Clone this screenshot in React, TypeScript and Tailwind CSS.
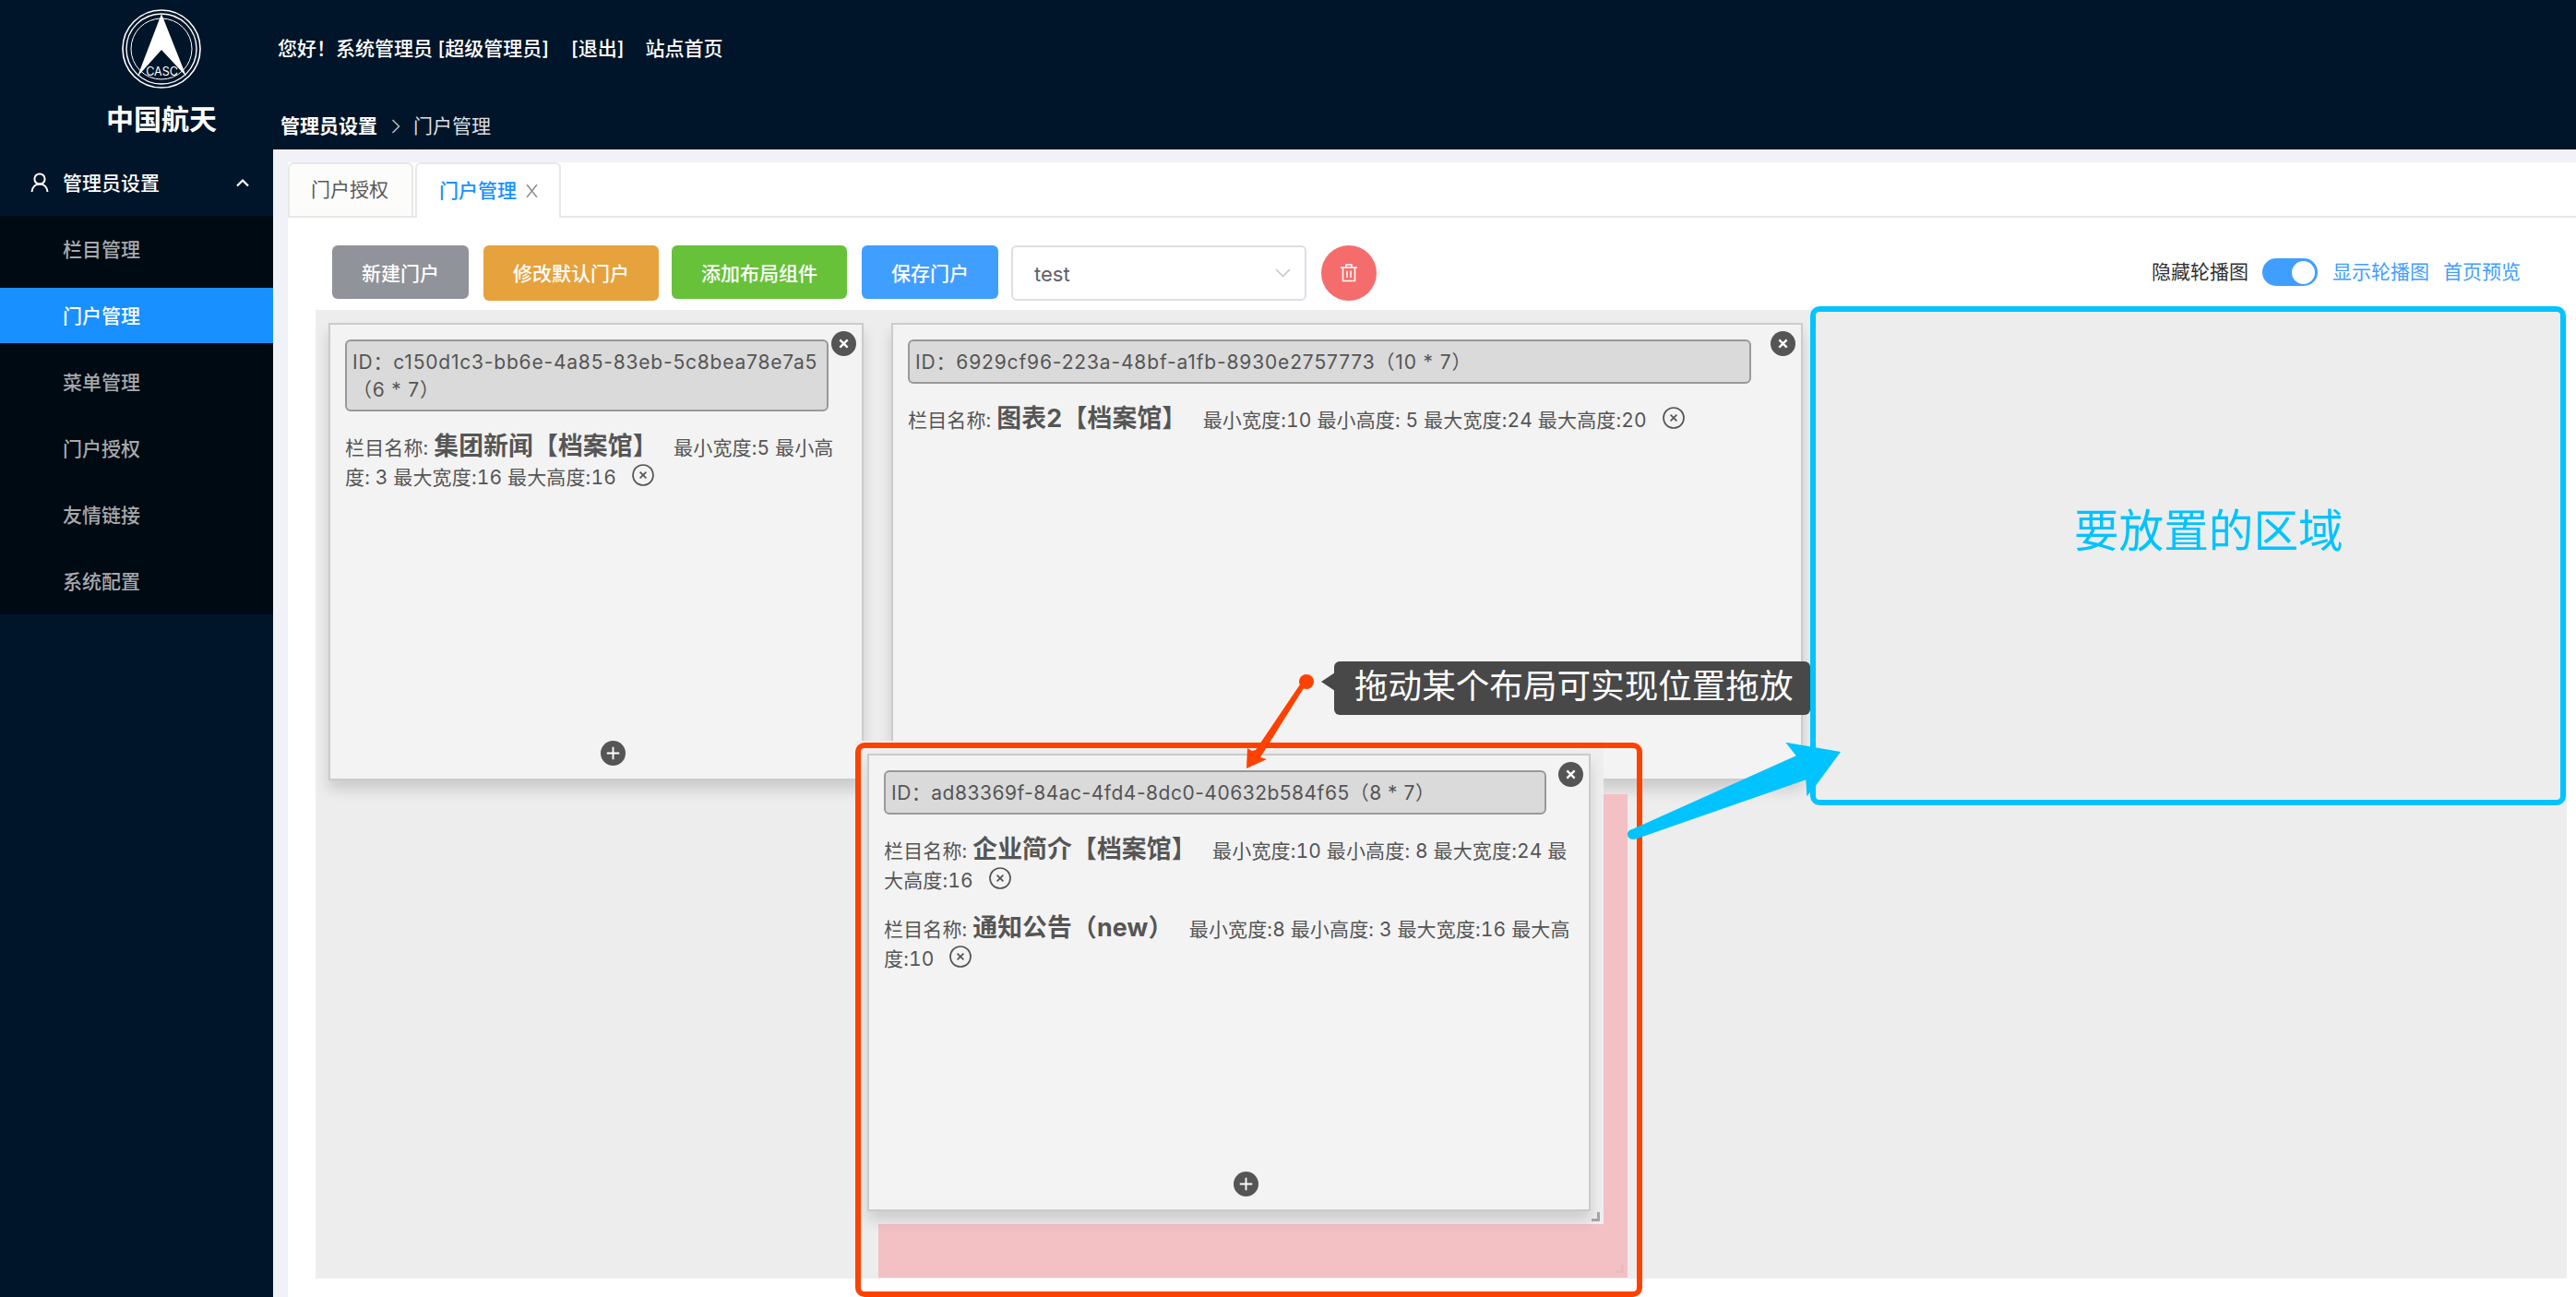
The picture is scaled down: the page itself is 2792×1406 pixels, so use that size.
import React from "react";

const MENU = ["栏目管理", "门户管理", "菜单管理", "门户授权", "友情链接", "系统配置"];

function RemoveIcon() {
  return (
    <svg className="ml-[17px] inline-block h-[24px] w-[24px] align-[-2px]" viewBox="0 0 24 24" fill="none" stroke="#555" strokeWidth="1.7">
      <circle cx="12" cy="12" r="11" />
      <path d="M8.600 8.600l6.800 6.800M15.400 8.600l-6.800 6.800" />
    </svg>
  );
}

function CloseDot() {
  return (
    <svg className="absolute top-[7px] right-[6px] h-[27px] w-[27px]" viewBox="0 0 26 26">
      <circle cx="13" cy="13" r="13" fill="#555" />
      <path d="M9 9l8 8M17 9l-8 8" stroke="#fff" strokeWidth="2.2" />
    </svg>
  );
}

function PlusDot() {
  return (
    <svg className="absolute bottom-[14px] left-1/2 ml-[5px] h-[27px] w-[27px]" viewBox="0 0 26 26">
      <circle cx="13" cy="13" r="13" fill="#555" />
      <path d="M13 6.5v13M6.5 13h13" stroke="#fff" strokeWidth="1.8" />
    </svg>
  );
}

type Item = { name: string; info: string };

function Card({ pos, inner, lines, items }: { pos: string; inner: string; lines: string[]; items: Item[] }) {
  return (
    <div className={"absolute border-2 border-[#cbcbcb] bg-[#f3f3f3] px-[16px] pt-[16px] shadow-[0_10px_14px_rgba(0,0,0,0.14)] " + pos}>
      <CloseDot />
      <div className={"rounded-[6px] border-2 border-[#999] bg-[#dadada] pt-[8px] pb-[6px] pl-[6px] text-[21px] leading-[30px] whitespace-nowrap text-[#555] " + inner}>
        {lines.map((l) => (
          <div key={l}>{l}</div>
        ))}
      </div>
      <div className="mt-[22px] flex flex-col gap-[19px]">
        {items.map((it) => (
          <div key={it.name} className="text-[21px] leading-[32px] tracking-[0.15px] whitespace-pre text-[#555] tabular-nums">
            栏目名称: <b className="text-[26.8px] leading-[30px] font-bold">{it.name}</b>
            {it.info}
            <RemoveIcon />
          </div>
        ))}
      </div>
      <PlusDot />
    </div>
  );
}

export default function App() {
  return (
    <div className="relative flex h-[1406px] w-[2792px] overflow-hidden bg-[#f0f2f7] font-['Inter','Noto_Sans_CJK_SC',sans-serif] text-[21px]">
      <aside className="flex w-[296px] shrink-0 flex-col bg-[#001529] text-white">
        <div className="flex h-[162px] flex-col items-center pl-[54px]">
          <svg className="mt-[10px] h-[86px] w-[86px]" viewBox="0 0 86 86" fill="none" stroke="#fff">
            <circle cx="43" cy="43" r="42" strokeWidth="1.6" />
            <circle cx="43" cy="43" r="38" strokeWidth="1.4" />
            <circle cx="43" cy="43" r="33" strokeWidth="1" />
            <path d="M43 5L70 73L43 44L17 73Z" fill="#fff" stroke="none" />
            <text x="43.500" y="72" fontSize="12.500" textAnchor="middle" fill="#fff" stroke="none">CASC</text>
          </svg>
          <div className="mt-[13px] text-[30px] leading-[40px] font-bold">中国航天</div>
        </div>
        <div className="flex h-[72px] items-center pr-[26px] pl-[33px] font-medium">
          <svg className="h-[22px] w-[20px]" viewBox="0 0 20 22" fill="none" stroke="#fff" strokeWidth="2">
            <circle cx="10" cy="7" r="5.6" />
            <path d="M1.5 21C2 15.500 5.500 12.500 10 12.500S18 15.500 18.500 21" />
          </svg>
          <span className="ml-[15px] flex-1 pt-[1px]">管理员设置</span>
          <svg className="h-[10px] w-[14px]" viewBox="0 0 14 10" fill="none" stroke="#fff" strokeWidth="2.2">
            <path d="M1 8.500L7 2.500L13 8.500" />
          </svg>
        </div>
        <nav className="flex h-[432px] flex-col gap-[12px] bg-[#000a13] py-[6px]">
          {MENU.map((m, i) => (
            <div
              key={m}
              className={
                i === 1
                  ? "flex h-[60px] items-center bg-[#1890ff] pt-[2px] pl-[68px] font-medium text-white"
                  : "flex h-[60px] items-center pt-[2px] pl-[68px] font-medium text-[#a6a9ac]"
              }
            >
              {m}
            </div>
          ))}
        </nav>
      </aside>

      <div className="flex flex-1 flex-col">
        <header className="flex h-[162px] flex-col bg-[#001529] text-white">
          <div className="mt-[37px] flex pl-[5px] leading-[32px] font-medium whitespace-pre">
            <span>您好！系统管理员 [超级管理员]</span>
            <span className="ml-[24px]">[退出]</span>
            <span className="ml-[23px]">站点首页</span>
          </div>
          <div className="mt-[52px] flex items-center pl-[8px] leading-[32px]">
            <span className="font-bold">管理员设置</span>
            <svg className="mr-[14px] ml-[15px] h-[16px] w-[10px]" viewBox="0 0 10 16" fill="none" stroke="#b0b8c0" strokeWidth="1.6">
              <path d="M1.500 1L8.500 8L1.500 15" />
            </svg>
            <span className="text-[#dcdfe3]">门户管理</span>
          </div>
        </header>

        <main className="mt-[14px] ml-[16px] flex flex-1 flex-col bg-white">
          <div className="flex h-[60px] border-b-2 border-[#e8e8e8]">
            <div className="flex h-[60px] w-[136px] items-center rounded-t-[6px] border-2 border-[#e8e8e8] bg-[#fcfcfa] pl-[23px] text-[#595959]">门户授权</div>
            <div className="ml-[2px] flex h-[60px] w-[158px] items-center rounded-t-[6px] border-2 border-b-0 border-[#e8e8e8] bg-white pl-[24px] font-medium text-[#1890ff]">
              门户管理
              <svg className="ml-[10px] h-[14px] w-[13px]" viewBox="0 0 13 14" fill="none" stroke="#8c8c8c" strokeWidth="1.5">
                <path d="M1 0L12 14M12 0L1 14" />
              </svg>
            </div>
          </div>

          <div className="flex h-[100px] items-start pt-[30px] pl-[48px] font-medium text-white">
            <div className="flex h-[58px] w-[148px] items-center justify-center rounded-[6px] bg-[#909399] pt-[3px]">新建门户</div>
            <div className="ml-[16px] flex h-[60px] w-[190px] items-center justify-center rounded-[6px] bg-[#e6a23c] pt-[1px]">修改默认门户</div>
            <div className="ml-[14px] flex h-[58px] w-[190px] items-center justify-center rounded-[6px] bg-[#67c23a] pt-[3px]">添加布局组件</div>
            <div className="ml-[16px] flex h-[58px] w-[148px] items-center justify-center rounded-[6px] bg-[#409eff] pt-[3px]">保存门户</div>
            <div className="ml-[14px] flex h-[60px] w-[320px] items-center justify-between rounded-[6px] border-2 border-[#dcdfe6] bg-white pr-[15px] pl-[23px] font-normal text-[#606266]">
              <span className="pt-[2px] text-[22px]">test</span>
              <svg className="h-[10px] w-[17px]" viewBox="0 0 17 10" fill="none" stroke="#c0c4cc" strokeWidth="1.5">
                <path d="M1 1L8.500 8.500L16 1" />
              </svg>
            </div>
            <div className="ml-[16px] flex h-[60px] w-[60px] items-center justify-center rounded-full bg-[#f56c6c]">
              <svg className="h-[20px] w-[18px]" viewBox="0 0 18 20" fill="none" stroke="#fff" strokeWidth="1.5">
                <path d="M0 4H18M2.500 4V18.500H15.500V4M6 3.500V1H12V3.500M7 7.500V15M11 7.500V15" />
              </svg>
            </div>
            <div className="ml-auto flex h-[58px] items-center pr-[60px] font-normal text-[#409eff]">
              <span className="text-[#303133]">隐藏轮播图</span>
              <span className="mr-[16px] ml-[15px] flex h-[30px] w-[60px] items-center justify-end rounded-full bg-[#409eff] pr-[3px]">
                <span className="h-[25px] w-[25px] rounded-full bg-white" />
              </span>
              <span>显示轮播图</span>
              <span className="ml-[15px]">首页预览</span>
            </div>
          </div>

          <div className="relative ml-[30px] h-[1050px] w-[2440px] bg-[#ededed]">
            <Card
              pos="left-[14px] top-[14px] h-[496px] w-[580px]"
              inner="w-[524px] tracking-[0.8px]"
              lines={["ID：c150d1c3-bb6e-4a85-83eb-5c8bea78e7a5", "（6 * 7）"]}
              items={[{ name: "集团新闻【档案馆】", info: "   最小宽度:5 最小高\n度: 3 最大宽度:16 最大高度:16" }]}
            />
            <Card
              pos="left-[624px] top-[14px] h-[496px] w-[988px]"
              inner="w-[914px] tracking-[0.85px]"
              lines={["ID：6929cf96-223a-48bf-a1fb-8930e2757773（10 * 7）"]}
              items={[{ name: "图表2【档案馆】", info: "   最小宽度:10 最小高度: 5 最大宽度:24 最大高度:20" }]}
            />
            <div className="absolute top-[525px] left-[610px] h-[524px] w-[812px] bg-[#f3c0c4]">
              <div className="absolute right-[4px] bottom-[5px] h-[9px] w-[9px] border-r-3 border-b-3 border-[#e4bcbf]" />
            </div>
            <div className="absolute top-[467px] left-[585px] h-[524px] w-[811px] bg-[#eeeeee]">
              <div className="absolute right-[4px] bottom-[3px] h-[10px] w-[9px] border-r-3 border-b-3 border-[#a8a8a8]" />
            </div>
            <Card
              pos="left-[598px] top-[481px] h-[496px] w-[784px]"
              inner="w-[718px] tracking-[0.5px]"
              lines={["ID：ad83369f-84ac-4fd4-8dc0-40632b584f65（8 * 7）"]}
              items={[
                { name: "企业简介【档案馆】", info: "   最小宽度:10 最小高度: 8 最大宽度:24 最\n大高度:16" },
                { name: "通知公告（new）", info: "   最小宽度:8 最小高度: 3 最大宽度:16 最大高\n度:10" },
              ]}
            />
          </div>
        </main>
      </div>

      <div className="absolute top-[805px] left-[927px] h-[601px] w-[853px] rounded-[10px] border-6 border-[#ff4100]" />
      <div className="absolute top-[332px] left-[1962px] h-[541px] w-[819px] rounded-[10px] border-6 border-[#00c3ff]" />
      <div className="absolute top-[541px] left-[2248px] text-[48.6px] leading-[70px] whitespace-nowrap text-[#00c3ff]">要放置的区域</div>
      <div className="absolute top-[717px] left-[1446px] h-[58px] w-[516px] rounded-[6px] bg-[#484848] pl-[22px] text-[36.6px] leading-[54px] whitespace-nowrap text-white">拖动某个布局可实现位置拖放</div>
      <svg className="absolute top-[0px] left-[0px] h-[1406px] w-[2792px]" viewBox="0 0 2792 1406">
        <path d="M1432 739L1447 729V749Z" fill="#484848" />
        <circle cx="1416" cy="739" r="8" fill="#ff4100" />
        <path d="M1409 742L1361 813L1357 814L1352 811L1351 833L1373 823L1366 821L1413 746Z" fill="#ff4100" />
        <path d="M1769 899L1946.700 819.300L1935.300 804.700L1995 815L1968.700 850.700L1958.300 863.300L1957.300 845.300L1773 909.500Q1764 911 1764 904Q1764 900 1769 899Z" fill="#00c3ff" />
      </svg>
    </div>
  );
}
